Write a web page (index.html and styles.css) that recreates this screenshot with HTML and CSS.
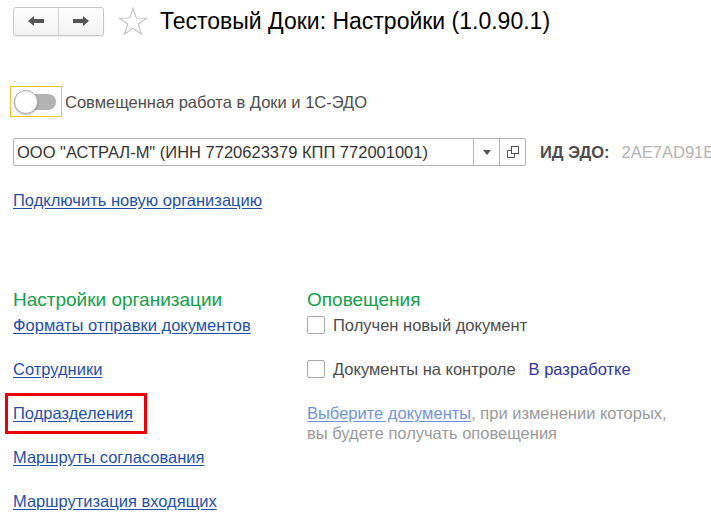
FILE: index.html
```html
<!DOCTYPE html>
<html lang="ru">
<head>
  <meta charset="UTF-8" />
  <title>Тестовый Доки: Настройки</title>
  <link rel="stylesheet" href="styles.css">
</head>
<body>
  <div class="header">
    <div class="nav">
      <button class="nav-btn">
        <svg width="18" height="12" viewBox="0 0 18 12"><path d="M1 6 L7 1 L7 4 L17 4 L17 8 L7 8 L7 11 Z" fill="#555"/></svg>
      </button>
      <button class="nav-btn">
        <svg width="18" height="12" viewBox="0 0 18 12"><path d="M17 6 L11 1 L11 4 L1 4 L1 8 L11 8 L11 11 Z" fill="#555"/></svg>
      </button>
    </div>
    <svg class="star" width="30" height="29" viewBox="0 0 30 29">
      <path d="M15 1.5 L18.4 11 L28.5 11.2 L20.4 17.3 L23.3 27 L15 21.2 L6.7 27 L9.6 17.3 L1.5 11.2 L11.6 11 Z" fill="none" stroke="#c4c4c4" stroke-width="1.2" stroke-linejoin="miter"/>
    </svg>
    <h1>Тестовый Доки: Настройки (1.0.90.1)</h1>
  </div>

  <div class="toggle-row">
    <div class="toggle-focus">
      <div class="toggle">
        <div class="knob"></div>
      </div>
    </div>
    <span>Совмещенная работа в Доки и 1С-ЭДО</span>
  </div>

  <div class="org-row">
    <div class="combo">
      <div class="combo-text">ООО "АСТРАЛ-М" (ИНН 7720623379 КПП 772001001)</div>
      <div class="combo-btn">
        <svg width="8" height="5" viewBox="0 0 8 5"><path d="M0 0 L8 0 L4 5 Z" fill="#555"/></svg>
      </div>
      <div class="combo-btn">
        <svg width="12" height="12" viewBox="0 0 12 12">
          <rect x="4.5" y="0.5" width="7" height="7" fill="none" stroke="#555"/>
          <path d="M0.5 4.5 V11.5 H7.5 V8" fill="none" stroke="#555"/>
          <path d="M0.5 4.5 H4" fill="none" stroke="#555"/>
        </svg>
      </div>
    </div>
    <span class="edo-label">ИД ЭДО:</span>
    <span class="edo-value">2AE7AD91E</span>
  </div>

  <a class="link new-org" href="#">Подключить новую организацию</a>

  <div class="sections">
    <div class="column">
      <div class="group-title">Настройки организации</div>
      <div class="row"><a class="link" href="#">Форматы отправки документов</a></div>
      <div class="row"><a class="link" href="#">Сотрудники</a></div>
      <div class="row"><a class="link marked" href="#">Подразделения</a></div>
      <div class="row"><a class="link" href="#">Маршруты согласования</a></div>
      <div class="row"><a class="link" href="#">Маршрутизация входящих</a></div>
    </div>
    <div class="column">
      <div class="group-title">Оповещения</div>
      <div class="row"><span class="checkbox"></span>Получен новый документ</div>
      <div class="row"><span class="checkbox"></span>Документы на контроле <span class="dev">В разработке</span></div>
      <div class="note">
        <a class="link light" href="#">Выберите документы</a>, при изменении которых,<br>
        вы будете получать оповещения
      </div>
    </div>
  </div>
</body>
</html>
```

FILE: styles.css
```css
body {
  margin: 0;
  padding: 6px 13px 0 13px;
  font-family: 'Liberation Sans', Arial, sans-serif;
  font-size: 16.5px;
  line-height: 20px;
  color: #4d4d4d;
  background: #fff;
  overflow: hidden;
}

/* Шапка */
.header {
  display: flex;
  align-items: center;
  height: 30px;
}

.nav {
  display: flex;
  width: 91px;
  height: 29px;
  border: 1px solid #c8c8c8;
  border-radius: 3px;
  box-sizing: border-box;
  background: linear-gradient(#fff, #f2f2f2);
  box-shadow: 0 1px 1px rgba(0, 0, 0, 0.08);
}

.nav-btn {
  flex: 1;
  border: none;
  background: none;
  padding: 0;
  display: flex;
  align-items: center;
  justify-content: center;
}

.nav-btn + .nav-btn {
  border-left: 1px solid #d4d4d4;
}

.star {
  margin-left: 14px;
}

h1 {
  margin: 0 0 0 12px;
  font-size: 23px;
  line-height: 28px;
  font-weight: normal;
  color: #000;
  white-space: nowrap;
}

/* Переключатель */
.toggle-row {
  display: flex;
  align-items: center;
  margin: 50px 0 0 -3px;
  height: 31px;
  white-space: nowrap;
}

.toggle-focus {
  width: 52px;
  height: 31px;
  box-sizing: border-box;
  border: 1px solid #f2c229;
  display: flex;
  align-items: center;
  padding-left: 3px;
  margin-right: 3px;
}

.toggle {
  position: relative;
  width: 42px;
  height: 16px;
  border-radius: 8px;
  background: #b3b3b3;
}

.knob {
  position: absolute;
  left: 0;
  top: -4px;
  width: 22px;
  height: 22px;
  border-radius: 50%;
  background: #fff;
  border: 1px solid #a8a8a8;
  box-shadow: 0 1px 2px rgba(0, 0, 0, 0.25);
}

/* Организация */
.org-row {
  display: flex;
  align-items: center;
  margin-top: 21px;
  white-space: nowrap;
}

.combo {
  display: flex;
  flex-shrink: 0;
  width: 513px;
  height: 28px;
  box-sizing: border-box;
  border: 1px solid #b5b5b5;
  border-radius: 2px;
  color: #333;
}

.combo-text {
  flex: 1;
  padding: 0 3px;
  line-height: 26px;
  overflow: hidden;
}

.combo-btn {
  width: 25px;
  border-left: 1px solid #b5b5b5;
  display: flex;
  align-items: center;
  justify-content: center;
}

.edo-label {
  margin-left: 14px;
  font-weight: bold;
  color: #4d4d4d;
}

.edo-value {
  margin-left: 12px;
  color: #b3b3b3;
}

/* Ссылки */
.link {
  color: #1f4fac;
  text-decoration: underline;
  text-underline-offset: 2px;
}

.new-org {
  display: inline-block;
  margin-top: 24px;
}

.link.light {
  color: #7094dc;
}

.marked {
  position: relative;
}

.marked::after {
  content: '';
  position: absolute;
  left: -8px;
  right: -14px;
  top: -10px;
  bottom: -11px;
  border: 3px solid #e8000b;
}

/* Группы */
.sections {
  display: grid;
  grid-template-columns: 294px 1fr;
  margin-top: 80px;
}

.column {
  display: flex;
  flex-direction: column;
  gap: 24px;
}

.group-title {
  font-size: 19px;
  color: #13a04b;
  height: 20px;
  line-height: 20px;
  margin-bottom: -19px;
}

.row {
  display: flex;
  align-items: center;
  height: 20px;
  white-space: nowrap;
}

.checkbox {
  width: 18px;
  height: 18px;
  box-sizing: border-box;
  border: 1px solid #a9a9a9;
  border-radius: 2px;
  margin-right: 8px;
}

.dev {
  margin-left: 13px;
  color: #2f33a6;
}

.note {
  color: #9a9a9a;
  line-height: 20px;
  white-space: nowrap;
}
```
